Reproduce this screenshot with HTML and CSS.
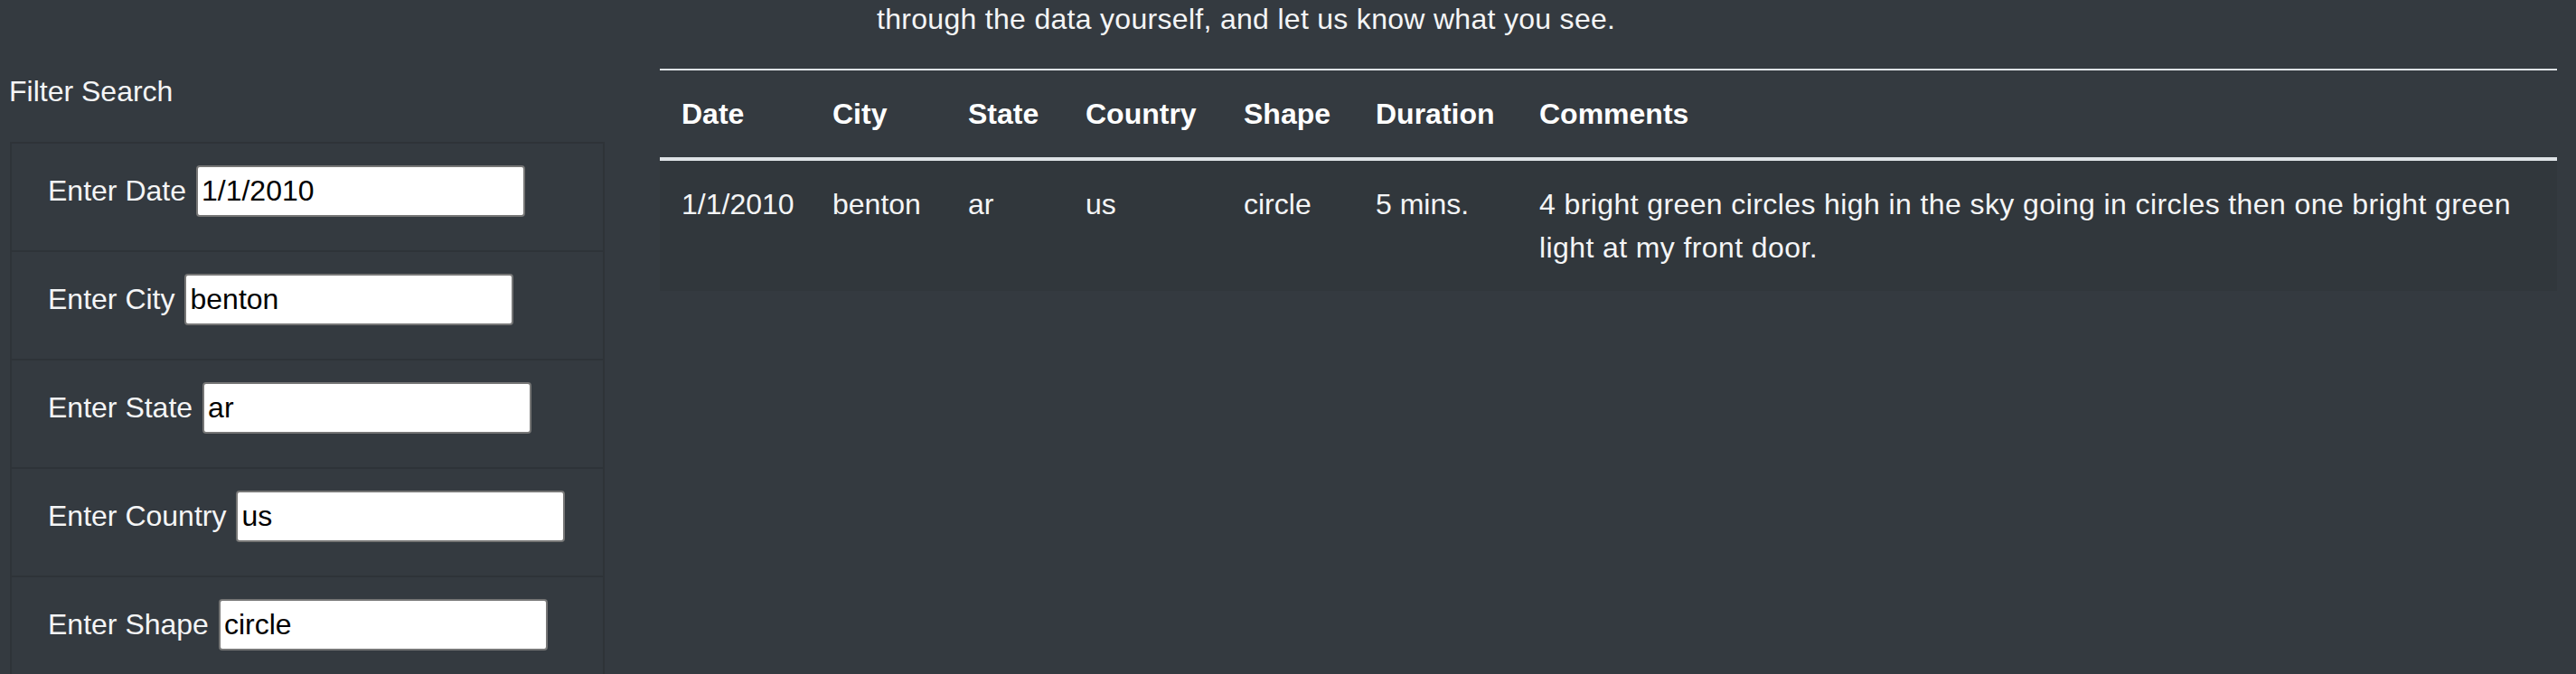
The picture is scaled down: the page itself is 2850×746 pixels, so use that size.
FILE: index.html
```html
<!DOCTYPE html>
<html lang="en">
<head>
<meta charset="utf-8">
<title>UFO Sightings</title>
<link rel="stylesheet" href="styles.css">
</head>
<body>
<p class="intro">through the data yourself, and let us know what you see.</p>
<div class="layout">
  <aside class="sidebar">
    <div class="filter-title">Filter Search</div>
    <ul class="filter-list">
      <li class="filter-item"><label class="filter-label" for="datetime">Enter Date</label><input class="filter-input" id="datetime" type="text" value="1/1/2010"></li>
      <li class="filter-item"><label class="filter-label" for="city">Enter City</label><input class="filter-input" id="city" type="text" value="benton"></li>
      <li class="filter-item"><label class="filter-label" for="state">Enter State</label><input class="filter-input" id="state" type="text" value="ar"></li>
      <li class="filter-item"><label class="filter-label" for="country">Enter Country</label><input class="filter-input" id="country" type="text" value="us"></li>
      <li class="filter-item"><label class="filter-label" for="shape">Enter Shape</label><input class="filter-input" id="shape" type="text" value="circle"></li>
    </ul>
  </aside>
  <main class="content">
    <table class="ufo-table">
      <colgroup>
        <col class="c-date"><col class="c-city"><col class="c-state"><col class="c-country"><col class="c-shape"><col class="c-duration"><col class="c-comments">
      </colgroup>
      <thead>
        <tr><th>Date</th><th>City</th><th>State</th><th>Country</th><th>Shape</th><th>Duration</th><th>Comments</th></tr>
      </thead>
      <tbody>
        <tr><td>1/1/2010</td><td>benton</td><td>ar</td><td>us</td><td>circle</td><td>5 mins.</td><td class="comment-cell">4 bright green circles high in the sky going in circles then one bright green light at my front door.</td></tr>
      </tbody>
    </table>
  </main>
</div>
</body>
</html>
```
FILE: styles.css
```css
html, body {
  margin: 0;
  padding: 0;
  background: #343a40;
  color: #fff;
  font-family: "Liberation Sans", Arial, sans-serif;
  font-size: 32px;
  line-height: 48px;
}

.intro {
  margin: -3px 0 0 0;
  padding-left: 970px;
  color: #f4f5f6;
  letter-spacing: 0.3px;
}

.layout {
  display: flex;
  align-items: flex-start;
  margin-top: 31px;
}

.sidebar {
  margin-left: 10px;
  width: 659px;
  flex: none;
  padding-top: 1px;
}

.filter-title {
  margin-bottom: 32px;
  color: #f4f5f6;
}

.filter-list {
  list-style: none;
  margin: 0 0 0 1px;
  padding: 0;
  border-left: 2px solid #2e3338;
  border-right: 2px solid #2e3338;
}

.filter-item {
  display: flex;
  align-items: baseline;
  gap: 11px;
  padding: 24px 40px 24px 40px;
  border-top: 2px solid #2e3338;
  height: 70px;
}

.filter-label {
  color: #f4f5f6;
  margin-bottom: 16px;
}

.filter-input {
  box-sizing: border-box;
  width: 364px;
  height: 57px;
  padding: 2px 4px;
  border: 2px solid #767676;
  border-radius: 4px;
  background: #fff;
  color: #000;
  font-family: "Liberation Sans", Arial, sans-serif;
  font-size: 32px;
  line-height: 48px;
  margin: 0;
}

.content {
  margin-left: 61px;
  width: 2099px;
  flex: none;
}

.ufo-table {
  width: 2099px;
  table-layout: fixed;
  border-collapse: separate;
  border-spacing: 0;
  color: #fff;
}

.c-date { width: 167px; }
.c-city { width: 150px; }
.c-state { width: 130px; }
.c-country { width: 175px; }
.c-shape { width: 146px; }
.c-duration { width: 181px; }
.c-comments { width: auto; }

.ufo-table th {
  text-align: left;
  font-weight: bold;
  vertical-align: bottom;
  padding: 24px;
  border-top: 2px solid #dee2e6;
  border-bottom: 4px solid #dee2e6;
}

.ufo-table td {
  vertical-align: top;
  padding: 24px;
  color: #f4f5f6;
}

.ufo-table .comment-cell {
  letter-spacing: 0.4px;
}

.ufo-table tbody tr:nth-child(odd) {
  background: rgba(0, 0, 0, 0.05);
}
```
